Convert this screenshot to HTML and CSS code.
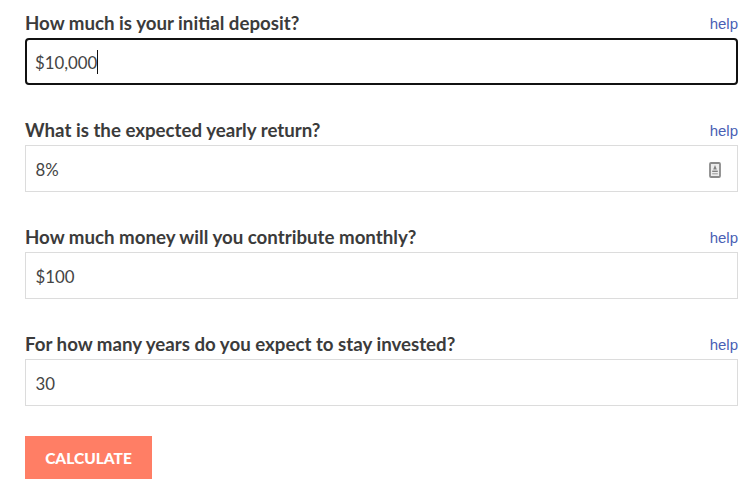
FILE: index.html
```html
<!DOCTYPE html>
<html lang="en">
<head>
    <meta charset="UTF-8">
    <title>Investment Calculator</title>
    <link rel="stylesheet" href="styles.css">
</head>
<body>
    <form class="calculator">
        <div class="question">
            <div class="question-head">
                <span class="question-label">How much is your initial deposit?</span>
                <a class="help" href="#">help</a>
            </div>
            <div class="field field-focus"><span>$10,000</span><span class="caret"></span></div>
        </div>
        <div class="question">
            <div class="question-head">
                <span class="question-label">What is the expected yearly return?</span>
                <a class="help" href="#">help</a>
            </div>
            <div class="field">
                <span>8%</span>
                <svg class="field-icon" width="12" height="16" viewBox="0 0 12 16">
                    <rect x="1" y="1" width="10" height="14" rx="1" fill="#ececec" stroke="#8a8a8a" stroke-width="1.8"/>
                    <path d="M6 3 L7.8 7.5 H4.2 Z" fill="#808080"/>
                    <rect x="3.2" y="8.6" width="5.6" height="1.4" fill="#808080"/>
                    <rect x="3.2" y="11" width="5.6" height="1.4" fill="#b0b0b0"/>
                </svg>
            </div>
        </div>
        <div class="question">
            <div class="question-head">
                <span class="question-label">How much money will you contribute monthly?</span>
                <a class="help" href="#">help</a>
            </div>
            <div class="field"><span>$100</span></div>
        </div>
        <div class="question">
            <div class="question-head">
                <span class="question-label">For how many years do you expect to stay invested?</span>
                <a class="help" href="#">help</a>
            </div>
            <div class="field"><span>30</span></div>
        </div>
        <button class="calculate-btn" type="button">CALCULATE</button>
    </form>
</body>
</html>
```

FILE: styles.css
```css
body {
    font-family: 'Lato', sans-serif;
    margin: 0;
    background-color: #fff;
    color: #3a3a3a;
}

.calculator {
    padding: 8px 17px 0 25px;
}

.question {
    margin-bottom: 30px;
}

.question-head {
    display: flex;
    justify-content: space-between;
    align-items: center;
    height: 30px;
}

.question-label {
    font-size: 18.7px;
    font-weight: 700;
    color: #3b3b3b;
}

.help {
    font-family: 'Liberation Sans', sans-serif;
    font-size: 15px;
    color: #4a5fb5;
    text-decoration: none;
    padding-top: 1px;
}

.field {
    display: flex;
    align-items: center;
    box-sizing: border-box;
    height: 47px;
    padding: 2px 9.5px 0;
    border: 1px solid #dcdcdc;
    font-size: 16.8px;
    color: #444;
}

.field-focus {
    border: 2.5px solid #111;
    border-radius: 4px;
    padding: 2px 8px 0;
}

.caret {
    width: 1px;
    height: 24px;
    margin-bottom: 2px;
    background-color: #111;
}

.field-icon {
    margin-left: auto;
    margin-right: 7px;
}

.calculate-btn {
    display: block;
    width: 127px;
    height: 43px;
    border: none;
    background-color: #ff7e65;
    color: #fff;
    font-family: 'Lato', sans-serif;
    font-size: 15.5px;
    font-weight: 900;
}
```
